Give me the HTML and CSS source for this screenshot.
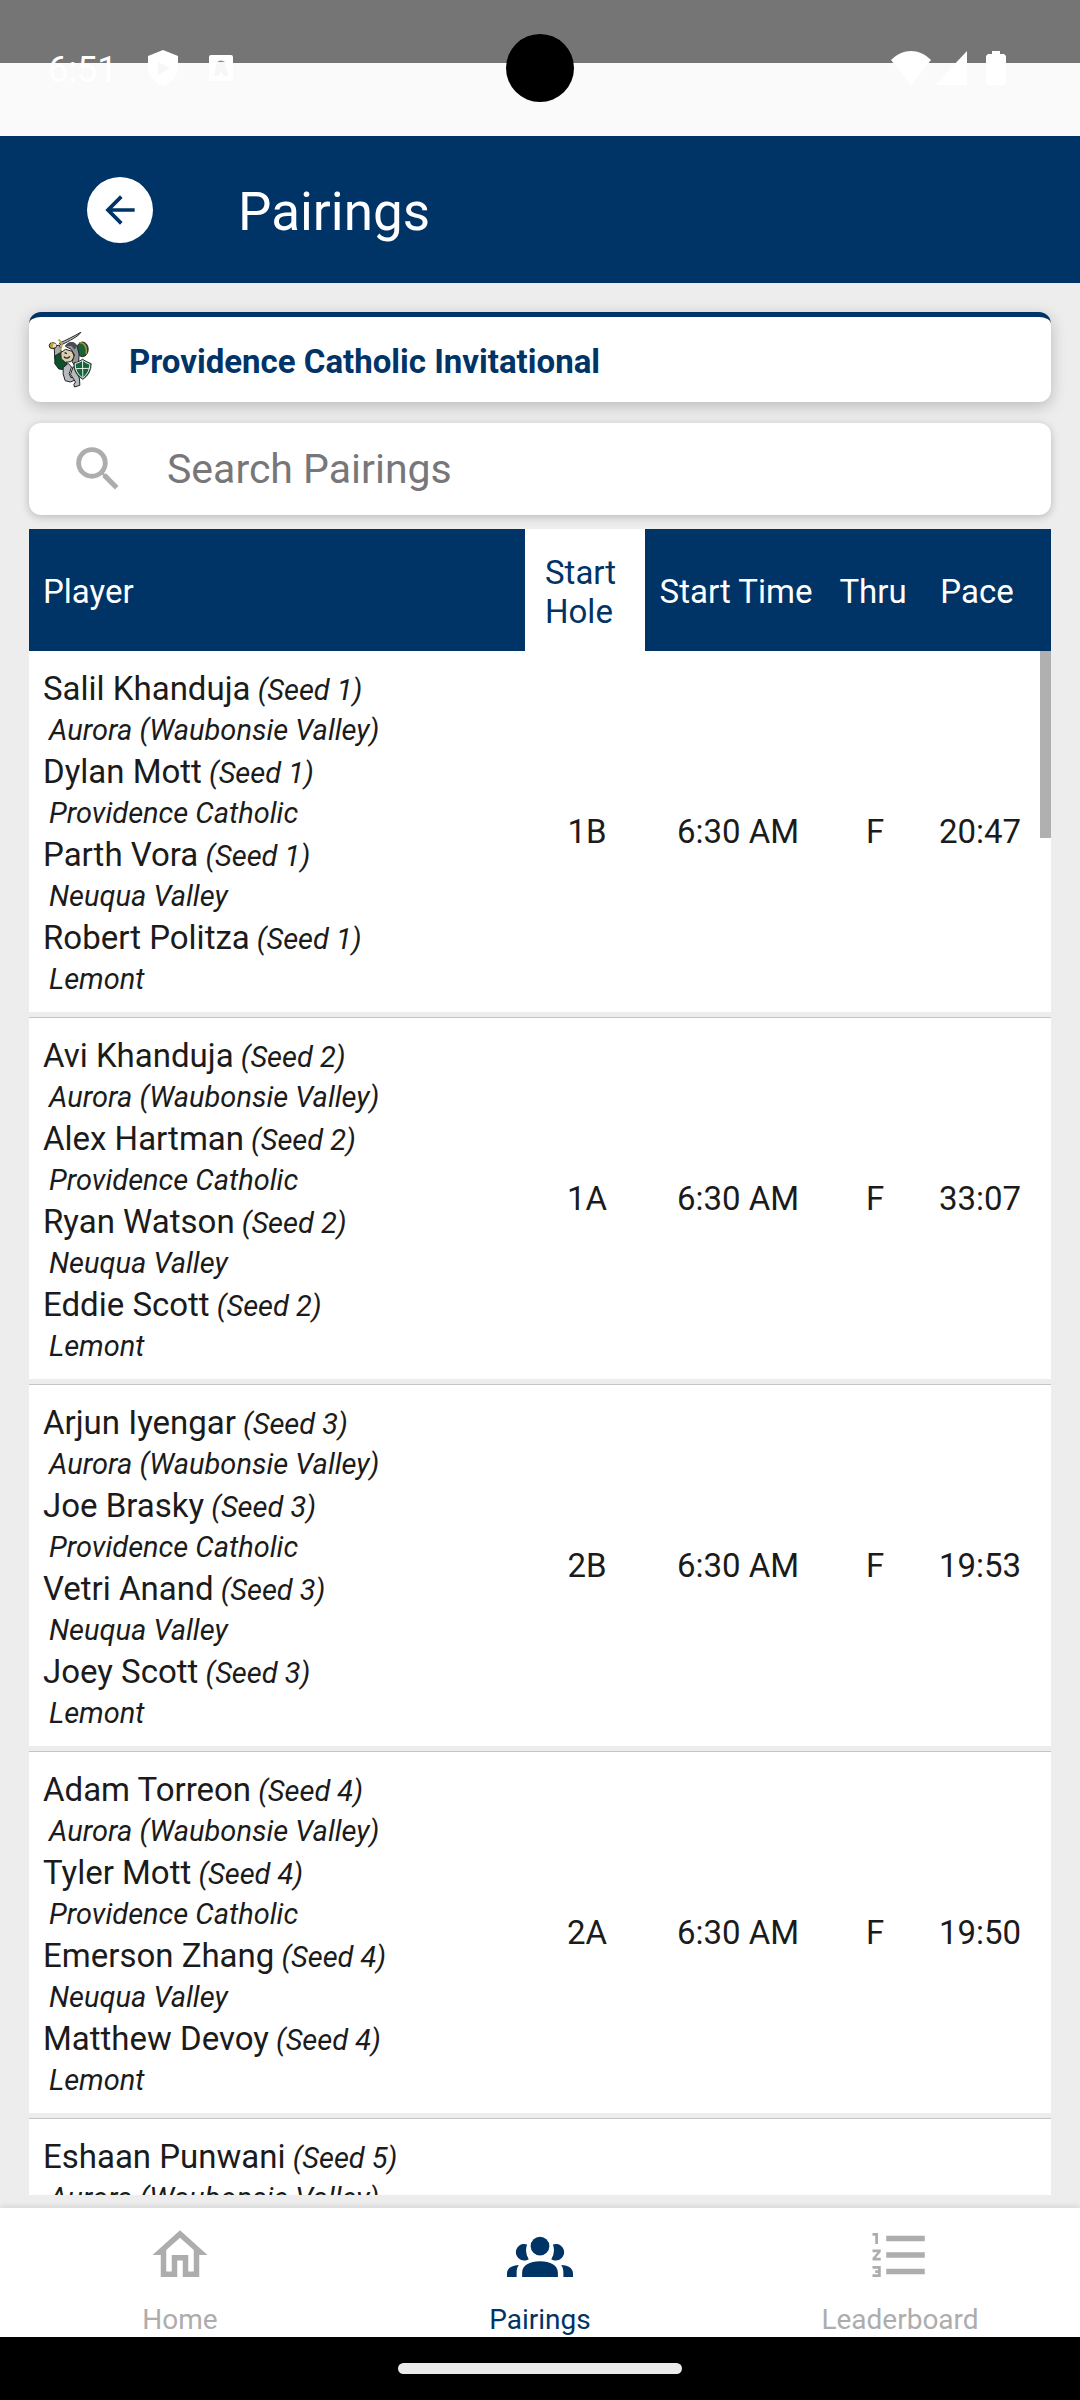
FILE: index.html
```html
<!DOCTYPE html>
<html lang="en">
<head>
  <meta charset="UTF-8" />
  <meta name="viewport" content="width=device-width, initial-scale=1.0" />
  <title>Pairings</title>
  <link rel="stylesheet" href="styles.css">
</head>
<body>
  <div class="status-bar">
    <div class="status-left">
      <span class="clock">6:51</span>
      <svg class="status-icon" viewBox="0 0 30 36"><path fill="#fff" d="M15 0l15 6v11c0 9-6 16-15 19C6 33 0 26 0 17V6z"/><path fill="#f7f7f7" d="M10 12l12 6-12 7z"/></svg>
      <svg class="status-app" viewBox="0 0 24 26"><rect width="24" height="26" rx="2" fill="#fff"/><path fill="#8a8a8a" d="M8 7q4-3 8 0z"/><path fill="#f7f7f7" d="M8 7h8l3 14h-4l-3-4-3 4H5z"/></svg>
    </div>
    <div class="status-right">
      <svg class="wifi" viewBox="0 0 40 34"><path fill="#fff" d="M0 9C12-3 28-3 40 9L20 34z"/></svg>
      <svg class="signal" viewBox="0 0 32 34"><path fill="#fff" d="M32 0v34H0z"/></svg>
      <svg class="battery" viewBox="0 0 20 34"><path fill="#fff" d="M6 0h8v3h4l2 2v27l-2 2H2l-2-2V5l2-2h4z"/></svg>
    </div>
    <div class="camera"></div>
  </div>

  <header class="app-bar">
    <button class="back" type="button" aria-label="Back">
      <svg viewBox="0 0 24 24"><path fill="currentColor" d="M20 11H7.83l5.59-5.59L12 4l-8 8 8 8 1.41-1.41L7.83 13H20v-2z"/></svg>
    </button>
    <h1>Pairings</h1>
  </header>

  <main>
    <div class="card event">
      <svg class="logo" viewBox="24 32 134 174">
        <path fill="#b7bbc0" stroke="#222" stroke-width="3" d="M58 68C78 60 102 47 122 36c-6 11-34 26-60 38z"/>
        <ellipse cx="127" cy="87" rx="17" ry="22" fill="#1d6133" stroke="#222" stroke-width="3"/>
        <path fill="none" stroke="#b59a45" stroke-width="4" d="M116 67c16-2 25 12 22 34"/>
        <path fill="#a9adb2" stroke="#222" stroke-width="3" d="M42 78l16-4 6 23-6 20-14-2z"/>
        <path fill="#0d512c" stroke="#222" stroke-width="3" d="M44 107l16-10 22 17-6 34-20-2-12-16z"/>
        <path fill="#b7bbc0" stroke="#222" stroke-width="3" d="M69 142l15-13 10 11-7 20 5 12 9-2 6 8-16 7-16-4-6-20z"/>
        <path fill="#b7bbc0" stroke="#222" stroke-width="3" d="M99 139l12 15 7 22 1 19-16 5-2-8 5-7-15-23z"/>
        <path fill="#d9cfae" stroke="#222" stroke-width="3" d="M62 97l14-10 20 6 7 17-11 14-17 2-12-11z"/>
        <path fill="#94989e" stroke="#222" stroke-width="3" d="M76 78c4-12 26-18 35 0l6 25-2 25-12 7-7-11 7-20-10-17z"/>
        <path fill="#4a4e54" d="M77 78c5-15 25-20 34-1l-8 11-9-11z"/>
        <path fill="none" stroke="#222" stroke-width="4" d="M71 109q11 9 18-1M73 97l7 3"/>
        <ellipse cx="38" cy="76" rx="11" ry="9" fill="#c1a044" stroke="#222" stroke-width="3"/>
        <path fill="none" stroke="#c1a044" stroke-width="5" d="M55 57q17 14 5 32M34 65l4 18"/>
        <path fill="#e7e1c7" d="M40 69l9 2-2 9-9 1z"/>
        <path fill="#13633b" stroke="#333" stroke-width="3" d="M101 128q14-2 26-11 14 9 26 13 0 30-25 47-28-15-27-49z"/>
        <path fill="none" stroke="#e8f0e8" stroke-width="3" d="M105 130q13-3 22-10 10 8 22 12 0 24-21 41-24-15-23-43zM127 121l1 50M106 145l43-1"/>
      </svg>
      <h2>Providence Catholic Invitational</h2>
    </div>

    <div class="card search">
      <label for="search" aria-label="Search Pairings">
        <svg viewBox="0 0 24 24"><path fill="currentColor" d="M15.5 14h-.79l-.28-.27A6.471 6.471 0 0 0 16 9.5 6.5 6.5 0 1 0 9.5 16c1.61 0 3.09-.59 4.23-1.57l.27.28v.79l5 4.99L20.49 19l-4.99-5zm-6 0C7.01 14 5 11.99 5 9.5S7.01 5 9.5 5 14 7.01 14 9.5 11.99 14 9.5 14z"/></svg>
      </label>
      <input type="text" id="search" placeholder="Search Pairings" />
    </div>

    <div class="list">
      <table>
        <thead>
          <tr>
            <th class="player">Player</th>
            <th class="hole sorted">Start Hole</th>
            <th class="time">Start Time</th>
            <th class="thru">Thru</th>
            <th class="pace">Pace</th>
          </tr>
        </thead>
        <tbody>
          <tr>
            <td class="player">
              <p>Salil Khanduja<i> (Seed 1)</i></p><p class="school">Aurora (Waubonsie Valley)</p>
              <p>Dylan Mott<i> (Seed 1)</i></p><p class="school">Providence Catholic</p>
              <p>Parth Vora<i> (Seed 1)</i></p><p class="school">Neuqua Valley</p>
              <p>Robert Politza<i> (Seed 1)</i></p><p class="school">Lemont</p>
            </td>
            <td>1B</td>
            <td>6:30 AM</td>
            <td>F</td>
            <td class="pace">20:47</td>
          </tr>
          <tr>
            <td class="player">
              <p>Avi Khanduja<i> (Seed 2)</i></p><p class="school">Aurora (Waubonsie Valley)</p>
              <p>Alex Hartman<i> (Seed 2)</i></p><p class="school">Providence Catholic</p>
              <p>Ryan Watson<i> (Seed 2)</i></p><p class="school">Neuqua Valley</p>
              <p>Eddie Scott<i> (Seed 2)</i></p><p class="school">Lemont</p>
            </td>
            <td>1A</td>
            <td>6:30 AM</td>
            <td>F</td>
            <td class="pace">33:07</td>
          </tr>
          <tr>
            <td class="player">
              <p>Arjun Iyengar<i> (Seed 3)</i></p><p class="school">Aurora (Waubonsie Valley)</p>
              <p>Joe Brasky<i> (Seed 3)</i></p><p class="school">Providence Catholic</p>
              <p>Vetri Anand<i> (Seed 3)</i></p><p class="school">Neuqua Valley</p>
              <p>Joey Scott<i> (Seed 3)</i></p><p class="school">Lemont</p>
            </td>
            <td>2B</td>
            <td>6:30 AM</td>
            <td>F</td>
            <td class="pace">19:53</td>
          </tr>
          <tr>
            <td class="player">
              <p>Adam Torreon<i> (Seed 4)</i></p><p class="school">Aurora (Waubonsie Valley)</p>
              <p>Tyler Mott<i> (Seed 4)</i></p><p class="school">Providence Catholic</p>
              <p>Emerson Zhang<i> (Seed 4)</i></p><p class="school">Neuqua Valley</p>
              <p>Matthew Devoy<i> (Seed 4)</i></p><p class="school">Lemont</p>
            </td>
            <td>2A</td>
            <td>6:30 AM</td>
            <td>F</td>
            <td class="pace">19:50</td>
          </tr>
          <tr>
            <td class="player">
              <p>Eshaan Punwani<i> (Seed 5)</i></p><p class="school">Aurora (Waubonsie Valley)</p>
            </td>
            <td></td>
            <td></td>
            <td></td>
            <td class="pace"></td>
          </tr>
        </tbody>
      </table>
      <div class="thumb"></div>
    </div>
  </main>

  <nav class="tabs">
    <a href="#home">
      <svg viewBox="0 0 24 24"><path fill="currentColor" d="M12 5.69l5 4.5V18h-2v-6H9v6H7v-7.810l5-4.500M12 3L2 12h3v8h6v-6h2v6h6v-8h3L12 3z"/></svg>
      Home
    </a>
    <a href="#pairings" class="active">
      <svg viewBox="0 0 24 24"><circle cx="12" cy="8.800" r="3.400"/><path d="M5.500 20v-1.600c0-2.600 2.700-4.100 6.500-4.100s6.500 1.500 6.500 4.100V20zM7.300 8.200a3 3 0 1 0 .6 5.300A6 6 0 0 1 7.300 8.200zM16.700 8.200a3 3 0 1 1-.6 5.300A6 6 0 0 0 16.700 8.200zM0 20v-1.300c0-1.800 1.500-3 4.300-3.100-.6.800-.8 1.700-.8 2.800V20zM24 20v-1.300c0-1.800-1.500-3-4.300-3.100.6.800.8 1.700.8 2.800V20z"/></svg>
      Pairings
    </a>
    <a href="#leaderboard">
      <svg viewBox="0 0 24 24"><path fill="currentColor" d="M2 17h2v.5H3v1h1v.5H2v1h3v-4H2v1zm1-9h1V4H2v1h1v3zm-1 3h1.800L2 13.100v.9h3v-1H3.200L5 10.900V10H2v1zm5-6v2h14V5H7zm0 14h14v-2H7v2zm0-6h14v-2H7v2z"/></svg>
      Leaderboard
    </a>
  </nav>
  <div class="gesture-bar"><div class="handle"></div></div>
</body>
</html>
```
FILE: styles.css
```css
:root {
  --navy: #003366;
  --page-bg: #ededed;
  --card-bg: #ffffff;
  --text-color: #1b1b1b;
  --muted: #adadad;
}

* {
  box-sizing: border-box;
}

body {
  font-family: Roboto, sans-serif;
  font-size: 33px;
  background: var(--page-bg);
  color: var(--text-color);
  margin: 0;
  height: 100vh;
  display: flex;
  flex-direction: column;
}

h1, h2, p {
  margin: 0;
}

svg {
  display: block;
}

/* status bar */
.status-bar {
  position: relative;
  flex: none;
  height: 136px;
  padding: 0 74px 0 48px;
  background: linear-gradient(#757575 63px, #fafafa 63px);
  display: flex;
  justify-content: space-between;
}

.status-left, .status-right {
  display: flex;
  align-items: center;
  height: 136px;
  color: #fff;
}

.clock {
  font-size: 36px;
  padding-top: 4px;
  margin-right: 31px;
}

.status-icon {
  width: 30px;
  height: 36px;
  margin-right: 31px;
}

.status-app {
  width: 24px;
  height: 26px;
}

.wifi {
  width: 40px;
  height: 34px;
}

.signal {
  width: 32px;
  height: 34px;
  margin: 0 19px 0 4px;
}

.battery {
  width: 20px;
  height: 34px;
}

.camera {
  position: absolute;
  left: calc(50% - 34px);
  top: 34px;
  width: 68px;
  height: 68px;
  border-radius: 50%;
  background: #000;
}

/* app bar */
.app-bar {
  flex: none;
  height: 147px;
  padding: 0 87px;
  background: var(--navy);
  color: #fff;
  display: flex;
  align-items: center;
}

.app-bar h1 {
  font-size: 53px;
  font-weight: 400;
  line-height: 64px;
  padding-top: 4px;
}

.back {
  width: 66px;
  height: 66px;
  padding: 0;
  margin-right: 85px;
  border: none;
  border-radius: 50%;
  background: #fff;
  color: var(--navy);
  display: flex;
  align-items: center;
  justify-content: center;
  cursor: pointer;
}

.back svg {
  width: 44px;
  height: 44px;
}

/* content */
main {
  flex: 1;
  min-height: 0;
  padding: 29px 29px 13px;
  display: flex;
  flex-direction: column;
}

.card {
  flex: none;
  background: var(--card-bg);
  border-radius: 12px;
  display: flex;
  align-items: center;
}

.event {
  height: 90px;
  margin-bottom: 21px;
  border-top: 5px solid var(--navy);
  padding-left: 19px;
  box-shadow: 0 4px 16px rgba(0, 0, 0, 0.22);
}

.event h2 {
  font-size: 33px;
  font-weight: 700;
  padding-top: 4px;
  color: var(--navy);
}

.logo {
  width: 45px;
  height: 58px;
  margin-right: 36px;
}

.search {
  height: 92px;
  margin-bottom: 14px;
  padding-left: 40px;
  box-shadow: 0 2px 8px rgba(0, 0, 0, 0.22);
}

.search label {
  color: var(--muted);
  margin-right: 40px;
}

.search svg {
  width: 58px;
  height: 58px;
}

.search input {
  flex: 1;
  min-width: 0;
  padding: 0;
  border: none;
  outline: none;
  background: none;
  font-family: inherit;
  font-size: 41px;
  color: var(--text-color);
}

.search input::placeholder {
  color: #77777a;
}

/* pairings table */
.list {
  position: relative;
  flex: 1;
  min-height: 0;
  overflow: hidden;
}

table {
  width: 100%;
  table-layout: fixed;
  border-spacing: 0;
}

th {
  height: 122px;
  padding: 3px 0 0;
  background: var(--navy);
  color: #fff;
  font-weight: 400;
  line-height: 39px;
}

th.player, td.player {
  text-align: left;
  padding-left: 14px;
}

th.hole {
  width: 120px;
  padding-left: 20px;
  padding-right: 20px;
  text-align: left;
}

th.sorted {
  background: #fff;
  color: var(--navy);
}

th.time {
  width: 182px;
}

th.thru {
  width: 92px;
}

th.pace {
  width: 132px;
  padding-right: 16px;
}

td {
  padding: 0 0 0 4px;
  background: var(--card-bg);
  border-bottom: 5px solid var(--page-bg);
  text-align: center;
}

td.pace {
  padding-right: 14px;
}

td.player {
  padding-top: 17px;
  padding-bottom: 12px;
}

tr + tr td {
  border-top: 1px solid #c4c4c4;
}

tr + tr td.player {
  padding-bottom: 12px;
}

td p {
  line-height: 42px;
  white-space: nowrap;
}

td i {
  font-size: 29px;
  line-height: 29px;
}

td .school {
  padding-left: 6px;
  font-size: 29px;
  font-style: italic;
  line-height: 41px;
}

.thumb {
  position: absolute;
  top: 122px;
  right: 0;
  width: 11px;
  height: 187px;
  background: #b0b0b0;
}

/* bottom tabs */
.tabs {
  flex: none;
  height: 129px;
  background: #fff;
  box-shadow: 0 -1px 6px rgba(0, 0, 0, 0.12);
  display: flex;
}

.tabs a {
  flex: 1;
  padding-top: 14px;
  display: flex;
  flex-direction: column;
  align-items: center;
  font-size: 28px;
  line-height: 34px;
  color: var(--muted);
  text-decoration: none;
}

.tabs a.active {
  color: var(--navy);
}

.tabs svg {
  width: 66px;
  height: 66px;
  margin-bottom: 15px;
  fill: currentColor;
}

.gesture-bar {
  flex: none;
  height: 63px;
  background: #000;
  display: flex;
  align-items: center;
  justify-content: center;
}

.handle {
  width: 284px;
  height: 11px;
  border-radius: 6px;
  background: #ebebeb;
}
```
